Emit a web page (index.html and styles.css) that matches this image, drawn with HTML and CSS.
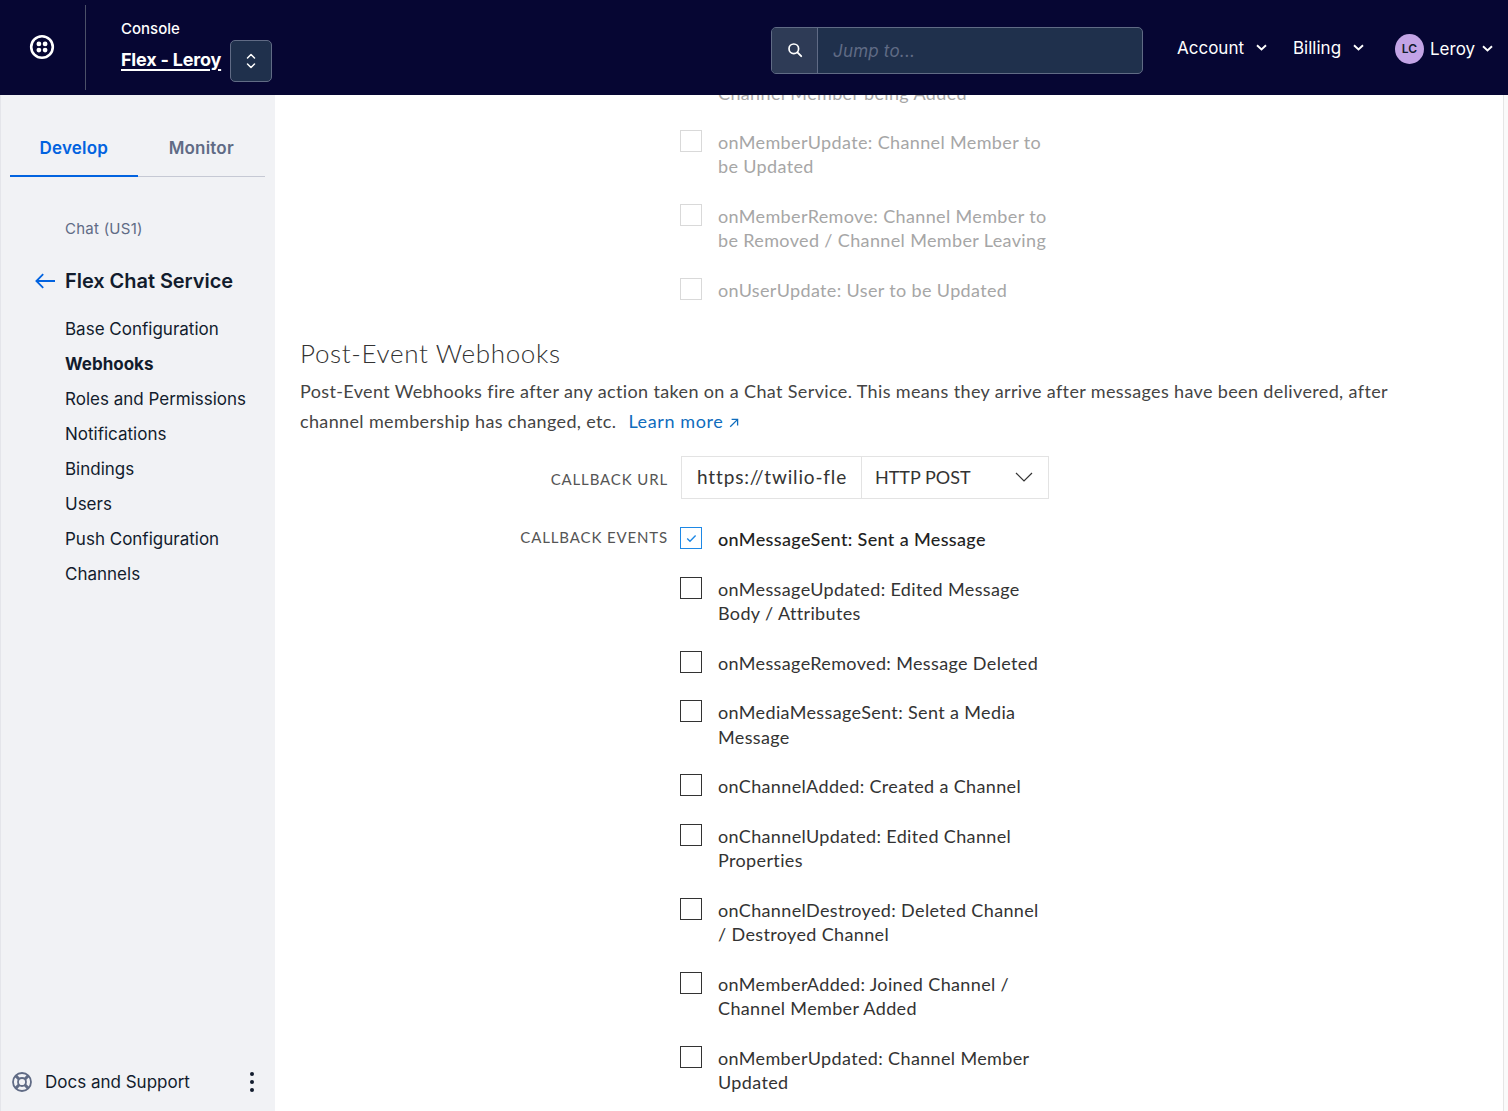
FILE: index.html
```html
<!DOCTYPE html>
<html lang="en">
<head>
    <meta charset="UTF-8" />
    <title>Webhooks - Flex Chat Service</title>
    <link rel="stylesheet" href="styles.css">
</head>

<body>
    <header class="topbar">
        <div class="logo-cell">
            <svg class="logo" width="26" height="26" viewBox="0 0 26 26" aria-hidden="true">
                <circle cx="13" cy="13" r="10.8" fill="none" stroke="#fff" stroke-width="2.6" />
                <circle cx="9.9" cy="9.9" r="2.4" fill="#fff" />
                <circle cx="16.1" cy="9.9" r="2.4" fill="#fff" />
                <circle cx="9.9" cy="16.1" r="2.4" fill="#fff" />
                <circle cx="16.1" cy="16.1" r="2.4" fill="#fff" />
            </svg>
        </div>
        <div class="account-cell">
            <div class="account-text">
                <span class="console-label">Console</span>
                <a class="account-name" href="#">Flex - Leroy</a>
            </div>
            <button class="switcher" aria-label="Switch account">
                <svg width="10" height="16" viewBox="0 0 10 16" aria-hidden="true">
                    <path d="M1.5 5 5 1.5 8.5 5M1.5 11 5 14.5 8.5 11" fill="none" stroke="#fff" stroke-width="1.5" stroke-linecap="round" stroke-linejoin="round" />
                </svg>
            </button>
        </div>
        <div class="search">
            <span class="search-icon">
                <svg width="16" height="16" viewBox="0 0 16 16" aria-hidden="true">
                    <circle cx="6.8" cy="6.8" r="4.8" fill="none" stroke="#fff" stroke-width="1.7" />
                    <path d="M10.4 10.4 14.2 14.2" stroke="#fff" stroke-width="1.9" stroke-linecap="round" />
                </svg>
            </span>
            <span class="search-placeholder">Jump to...</span>
        </div>
        <nav class="top-nav">
            <a class="top-link account-link" href="#">Account
                <svg class="caret" width="11" height="7" viewBox="0 0 11 7" aria-hidden="true"><path d="M1 1.2 5.5 5.4 10 1.2" fill="none" stroke="#fff" stroke-width="1.9" /></svg>
            </a>
            <a class="top-link billing-link" href="#">Billing
                <svg class="caret" width="11" height="7" viewBox="0 0 11 7" aria-hidden="true"><path d="M1 1.2 5.5 5.4 10 1.2" fill="none" stroke="#fff" stroke-width="1.9" /></svg>
            </a>
            <a class="top-link user-link" href="#">
                <span class="avatar">LC</span>
                <span class="user-name">Leroy</span>
                <svg class="caret" width="11" height="7" viewBox="0 0 11 7" aria-hidden="true"><path d="M1 1.2 5.5 5.4 10 1.2" fill="none" stroke="#fff" stroke-width="1.9" /></svg>
            </a>
        </nav>
    </header>

    <div class="layout">
        <aside class="sidebar">
            <div class="tabs">
                <a class="tab tab-active" href="#">Develop</a>
                <a class="tab" href="#">Monitor</a>
            </div>
            <div class="crumb">Chat (US1)</div>
            <div class="service-title">
                <svg width="21" height="16" viewBox="0 0 21 16" aria-hidden="true">
                    <path d="M20 8H1.5M8.2 1.2 1.4 8l6.8 6.8" fill="none" stroke="#0263e0" stroke-width="1.8" />
                </svg>
                <span>Flex Chat Service</span>
            </div>
            <ul class="side-menu">
                <li>Base Configuration</li>
                <li class="current">Webhooks</li>
                <li>Roles and Permissions</li>
                <li>Notifications</li>
                <li>Bindings</li>
                <li>Users</li>
                <li>Push Configuration</li>
                <li>Channels</li>
            </ul>
            <div class="side-footer">
                <svg width="22" height="22" viewBox="0 0 22 22" aria-hidden="true">
                    <circle cx="11" cy="11" r="9" fill="none" stroke="#606b85" stroke-width="1.8" />
                    <circle cx="11" cy="11" r="4" fill="none" stroke="#606b85" stroke-width="1.8" />
                    <path d="M4.6 4.6 8.2 8.2M17.4 4.6 13.8 8.2M4.6 17.4 8.2 13.8M17.4 17.4 13.8 13.8" stroke="#606b85" stroke-width="3" />
                </svg>
                <span class="docs-label">Docs and Support</span>
                <span class="kebab"><i></i><i></i><i></i></span>
            </div>
        </aside>

        <main class="content">
            <div class="scroll-inner">
                <ul class="event-list event-list-off">
                    <li class="event clipped"><span class="box hidden-box"></span><span class="event-text">Channel Member being Added</span></li>
                    <li class="event"><span class="box"></span><span class="event-text">onMemberUpdate: Channel Member to<br>be Updated</span></li>
                    <li class="event"><span class="box"></span><span class="event-text">onMemberRemove: Channel Member to<br>be Removed / Channel Member Leaving</span></li>
                    <li class="event"><span class="box"></span><span class="event-text">onUserUpdate: User to be Updated</span></li>
                </ul>

                <h2 class="section-title">Post-Event Webhooks</h2>
                <p class="section-desc">Post-Event Webhooks fire after any action taken on a Chat Service. This means they arrive after messages have been delivered, after channel membership has changed, etc. <a href="#">Learn more <svg width="10" height="10" viewBox="0 0 10 10" aria-hidden="true"><path d="M1.2 8.8 8.4 1.6M2.6 1.4H8.6V7.4" fill="none" stroke="#0f6cbd" stroke-width="1.3" /></svg></a></p>

                <div class="form-row url-row">
                    <label class="form-label" for="callbackUrl">Callback URL</label>
                    <div class="url-group">
                        <input class="url-input" id="callbackUrl" type="text" value="https://twilio-flex.com/webhook" spellcheck="false" />
                        <div class="method-select">
                            <span>HTTP POST</span>
                            <svg width="18" height="10" viewBox="0 0 18 10" aria-hidden="true"><path d="M1 1 9 9 17 1" fill="none" stroke="#333" stroke-width="1.2" /></svg>
                        </div>
                    </div>
                </div>

                <div class="form-row events-row">
                    <label class="form-label">Callback Events</label>
                    <ul class="event-list">
                        <li class="event event-on">
                            <span class="box box-checked">
                                <svg width="11" height="9" viewBox="0 0 11 9" aria-hidden="true"><path d="M1.2 4.6 4 7.2 9.6 1.6" fill="none" stroke="#1e88e5" stroke-width="1.4" /></svg>
                            </span>
                            <span class="event-text">onMessageSent: Sent a Message</span>
                        </li>
                        <li class="event"><span class="box"></span><span class="event-text">onMessageUpdated: Edited Message<br>Body / Attributes</span></li>
                        <li class="event"><span class="box"></span><span class="event-text">onMessageRemoved: Message Deleted</span></li>
                        <li class="event"><span class="box"></span><span class="event-text">onMediaMessageSent: Sent a Media<br>Message</span></li>
                        <li class="event"><span class="box"></span><span class="event-text">onChannelAdded: Created a Channel</span></li>
                        <li class="event"><span class="box"></span><span class="event-text">onChannelUpdated: Edited Channel<br>Properties</span></li>
                        <li class="event"><span class="box"></span><span class="event-text">onChannelDestroyed: Deleted Channel<br>/ Destroyed Channel</span></li>
                        <li class="event"><span class="box"></span><span class="event-text">onMemberAdded: Joined Channel /<br>Channel Member Added</span></li>
                        <li class="event"><span class="box"></span><span class="event-text">onMemberUpdated: Channel Member<br>Updated</span></li>
                    </ul>
                </div>
            </div>
            <div class="scroll-track"></div>
        </main>
    </div>
</body>

</html>
```

FILE: styles.css
```css
* {
    box-sizing: border-box;
}

html,
body {
    margin: 0;
    height: 100%;
    overflow: hidden;
    background: #fff;
}

body {
    display: flex;
    flex-direction: column;
    font-family: Inter, sans-serif;
    color: #121c2d;
}

a {
    text-decoration: none;
    color: inherit;
}

ul {
    list-style: none;
    margin: 0;
    padding: 0;
}

/* top bar */
.topbar {
    flex: 0 0 95px;
    display: flex;
    align-items: center;
    background: #060633;
    color: #fff;
    padding-left: 1px;
}

.logo-cell {
    width: 85px;
    height: 85px;
    display: flex;
    align-items: center;
    justify-content: center;
    border-right: 1px solid #4b5068;
    padding-right: 2px;
}

.logo {
    margin-top: -1px;
}

.account-cell {
    width: 685px;
    display: flex;
    align-items: flex-end;
    padding-left: 35px;
    gap: 9px;
}

.account-text {
    display: flex;
    flex-direction: column;
    gap: 7px;
    padding-bottom: 3px;
}

.console-label {
    font-size: 15px;
    font-weight: 500;
    line-height: 20px;
}

.account-name {
    font-size: 18px;
    font-weight: 700;
    line-height: 28px;
    letter-spacing: -0.2px;
    text-decoration: underline;
    text-underline-offset: 3px;
    text-decoration-thickness: 2px;
}

.switcher {
    width: 42px;
    height: 42px;
    margin-bottom: -5px;
    border-radius: 5px;
    background: #1f304c;
    border: 1px solid #606b85;
    display: flex;
    align-items: center;
    justify-content: center;
    padding: 0;
}

.search {
    width: 372px;
    height: 47px;
    margin-top: 5px;
    display: flex;
    align-items: stretch;
    background: #1f304c;
    border: 1px solid #606b85;
    border-radius: 5px;
    overflow: hidden;
}

.search-icon {
    width: 46px;
    display: flex;
    align-items: center;
    justify-content: center;
    background: #2e3b56;
    border-right: 1px solid #606b85;
}

.search-placeholder {
    align-self: center;
    padding: 2px 0 0 15px;
    font-size: 17px;
    font-style: italic;
    letter-spacing: 0.2px;
    color: #606b85;
}

.top-nav {
    display: flex;
    align-items: center;
    margin-left: 34px;
    font-size: 17px;
    font-weight: 400;
}

.top-link {
    display: flex;
    align-items: center;
}

.account-link {
    width: 116px;
    gap: 12px;
}

.billing-link {
    width: 102px;
    gap: 12px;
}

.user-link {
    margin-top: 2px;
}

.avatar {
    width: 29px;
    height: 30px;
    border-radius: 50%;
    background: #c3a4e6;
    color: #121c2d;
    font-size: 12px;
    font-weight: 600;
    display: flex;
    align-items: center;
    justify-content: center;
}

.user-name {
    margin-left: 6px;
    margin-right: 7px;
}

/* sidebar */
.layout {
    flex: 1;
    min-height: 0;
    display: flex;
}

.sidebar {
    flex: 0 0 275px;
    display: flex;
    flex-direction: column;
    background: #f1f2f5;
    border-left: 1px solid #e4e5ea;
    padding: 0 10px 0 9px;
}

.tabs {
    display: flex;
    margin-top: 28px;
    border-bottom: 1px solid #c6c9d4;
}

.tab {
    width: 127.5px;
    height: 53px;
    padding-bottom: 3px;
    display: flex;
    align-items: center;
    justify-content: center;
    font-size: 17px;
    font-weight: 600;
    letter-spacing: 0.2px;
    color: #606b85;
}

.tab-active {
    color: #0263e0;
    border-bottom: 2px solid #0263e0;
    margin-bottom: -1px;
    height: 54px;
    padding-bottom: 2px;
}

.crumb {
    margin: 42px 0 0 55px;
    font-size: 15px;
    line-height: 20px;
    letter-spacing: 0.25px;
    color: #606b85;
}

.service-title {
    display: flex;
    align-items: center;
    gap: 9px;
    margin: 30px 0 0 25px;
    font-size: 20px;
    font-weight: 600;
    line-height: 24px;
    letter-spacing: -0.05px;
}

.side-menu {
    margin: 19px 0 0 55px;
    font-size: 17px;
    line-height: 35px;
}

.side-menu .current {
    font-weight: 700;
}

.side-footer {
    margin-top: auto;
    height: 60px;
    display: flex;
    align-items: center;
    margin-left: 1px;
    padding-top: 1px;
    font-size: 17px;
}

.docs-label {
    margin-left: 12px;
}

.kebab {
    margin-left: 60px;
    display: flex;
    flex-direction: column;
    gap: 4px;
}

.kebab i {
    width: 4px;
    height: 4px;
    border-radius: 50%;
    background: #121c2d;
}

/* content */
.content {
    flex: 1;
    min-width: 0;
    position: relative;
    overflow: hidden;
    font-family: Lato, sans-serif;
    color: #333;
}

.scroll-inner {
    margin-top: -15px;
    padding-left: 25px;
    width: 1132px;
}

.scroll-track {
    position: absolute;
    top: 0;
    right: 0;
    bottom: 0;
    width: 5px;
    background: #fafafa;
    border-left: 1px solid #e5e5e5;
}

.event-list {
    display: flex;
    flex-direction: column;
    gap: 25px;
}

.event-list-off {
    margin-left: 380px;
    color: #a6a6a6;
}

.event {
    display: flex;
    gap: 16px;
    font-size: 18px;
    line-height: 24.5px;
    letter-spacing: 0.36px;
}

.event-on {
    color: #222;
    font-weight: 500;
}

.clipped {
    height: 24.5px;
}

.clipped .event-text {
    margin-top: 1px;
}

.box {
    flex: 0 0 22px;
    width: 22px;
    height: 22px;
    border: 1px solid #333;
    display: flex;
    align-items: center;
    justify-content: center;
}

.event-list-off .box {
    border-color: #d9d9d9;
}

.event-list-off .hidden-box {
    border-color: transparent;
}

.box-checked {
    border-color: #1e88e5;
}

.section-title {
    margin: 33px 0 0;
    font-size: 26px;
    font-weight: 300;
    line-height: 36px;
    letter-spacing: 0.66px;
}

.section-desc {
    margin: 5px 0 0;
    font-size: 18px;
    line-height: 30px;
    letter-spacing: 0.365px;
    max-width: 1100px;
    color: #444;
}

.section-desc a {
    margin-left: 7px;
    letter-spacing: 0.6px;
    color: #0f6cbd;
}

.form-row {
    display: flex;
}

.url-row {
    margin-top: 20px;
    align-items: center;
}

.events-row {
    margin-top: 28px;
}

.form-label {
    width: 368px;
    margin-right: 12px;
    text-align: right;
    font-size: 15px;
    letter-spacing: 0.87px;
    text-transform: uppercase;
    color: #555;
    padding-top: 2px;
}

.events-row .form-label {
    line-height: 20px;
    padding-top: 0;
}

.url-group {
    display: flex;
    height: 43px;
    margin-left: 1px;
    font-size: 18px;
}

.url-input {
    width: 180px;
    margin: 0;
    border: 1px solid #e3e3e3;
    border-right: 0;
    border-radius: 0;
    padding: 0 15px 3px;
    outline: none;
    color: #333;
    font-family: inherit;
    font-size: 19px;
    letter-spacing: 0.85px;
}

.method-select {
    width: 188px;
    border: 1px solid #e3e3e3;
    padding: 0 15px 1px 13px;
    display: flex;
    align-items: center;
    justify-content: space-between;
}
```
